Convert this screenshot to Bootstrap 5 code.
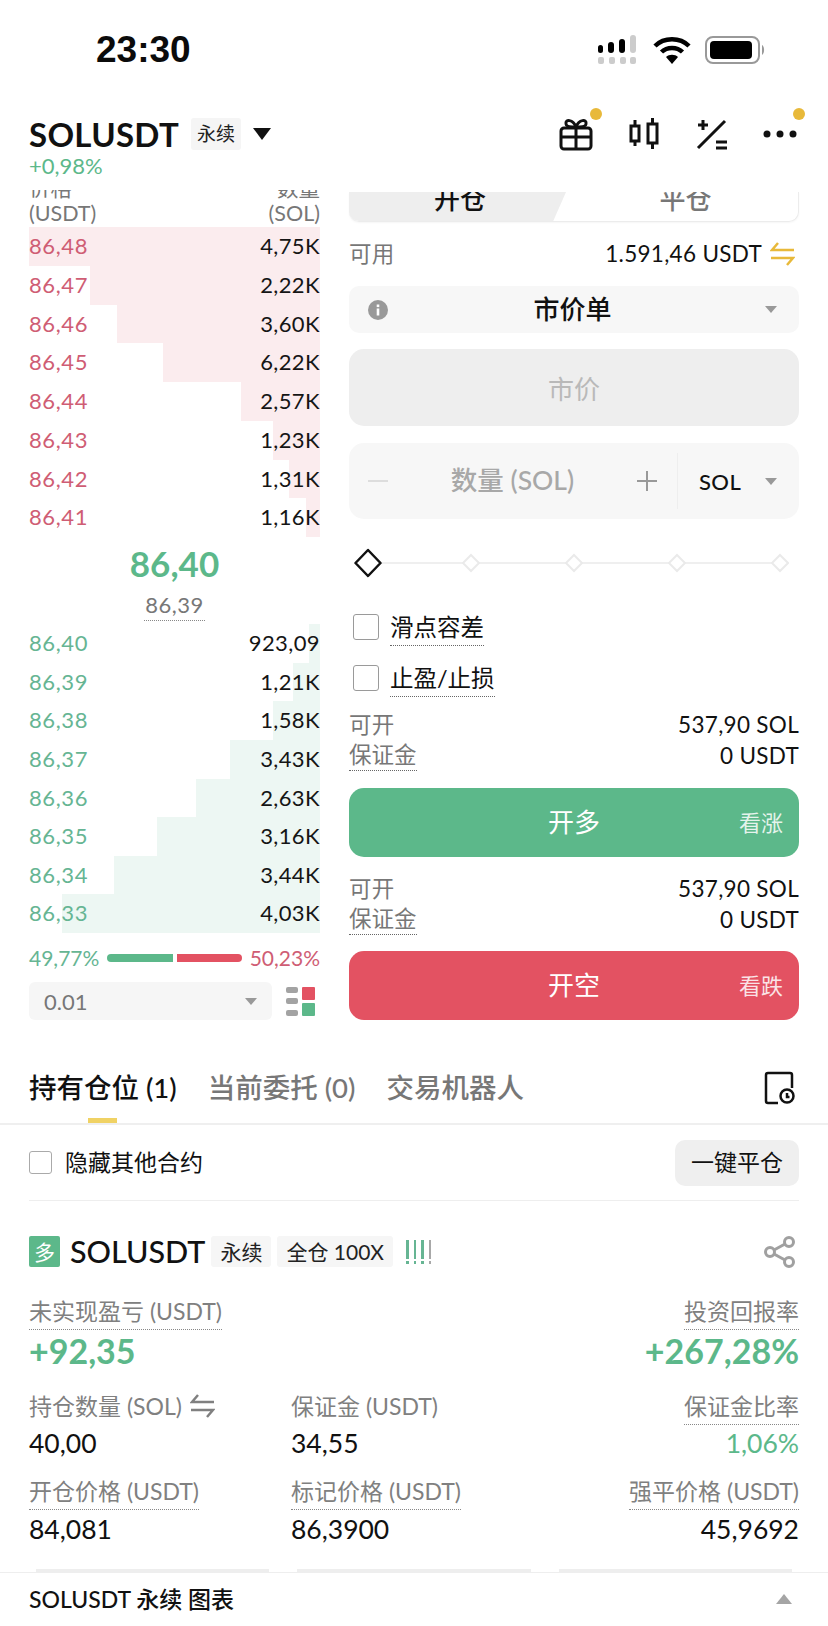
<!DOCTYPE html>
<html lang="zh-CN">
<head>
  <meta charset="UTF-8">
  <meta name="viewport" content="width=device-width, initial-scale=1">
  <title>SOLUSDT 永续</title>
  <link href="https://cdn.jsdelivr.net/npm/bootstrap@5.3.2/dist/css/bootstrap.min.css" rel="stylesheet">
  <style>
    body { width: 828px; height: 1626px; overflow: hidden; background: #fff; color: #111; font-family: Lato, "Noto Sans CJK SC", sans-serif; }
    .status-bar { height: 100px; padding: 0 62px 0 96px; }
    .status-time { font: bold 37px "Liberation Sans", sans-serif; color: #0b0b0b; }
    .top-head { height: 90px; padding: 17px 29px 0; }
    .pair-name { font-size: 33px; font-weight: 700; line-height: 34px; letter-spacing: .3px; }
    .tag-soft { background: #f5f5f5; font-size: 19px; line-height: 32px; padding: 0 6px; border-radius: 3px; color: #222; margin-left: 12px; }
    .pair-caret { margin-left: 11px; }
    .pair-change { font-size: 22px; line-height: 26px; color: #5cb88a; margin-top: 2px; }
    .head-icons { gap: 35px; margin-right: 1px; }
    .head-icon { position: relative; display: block; }
    .head-dot { position: absolute; width: 12px; height: 12px; border-radius: 50%; background: #e8b93a; top: -9px; right: -9px; }
    .trade-wrap { padding: 0 29px; gap: 29px; height: 830px; }
    .book-col { width: 291px; }
    .form-col { width: 450px; padding-top: 2px; }
    .book-clip { height: 37px; overflow: hidden; }
    .book-head { margin-top: -14px; font-size: 21.5px; line-height: 25px; color: #777; }
    .book-line { position: relative; font-size: 22px; }
    .book-ask .book-line { height: 38.75px; line-height: 38.75px; }
    .book-bid .book-line { height: 38.625px; line-height: 38.625px; }
    .book-fill { position: absolute; top: 0; right: 0; bottom: 0; }
    .book-ask .book-fill { background: #fbecee; }
    .book-bid .book-fill { background: #edf7f3; }
    .book-ask .book-price { color: #cf5d74; }
    .book-bid .book-price { color: #66b593; }
    .book-price, .book-size { position: relative; letter-spacing: .6px; }
    .book-size { color: #151515; letter-spacing: .4px; }
    .mid-price { height: 52px; line-height: 52px; font-size: 35px; font-weight: 700; color: #5cb88a; }
    .mark-price { height: 32px; line-height: 31px; font-size: 22px; color: #777; letter-spacing: .5px; display: inline-block; border-bottom: 1px dotted #888; padding: 0 1px; }
    .mid-box { height: 87px; }
    .ratio-line { height: 49px; font-size: 21px; gap: 8px; }
    .ratio-green { color: #66b593; }
    .ratio-red { color: #cf5d74; }
    .ratio-bar { height: 8px; flex: 1; }
    .step-select { height: 38px; width: 243px; background: #f6f6f6; border-radius: 6px; padding: 0 15px; color: #777; font-size: 22px; }
    .tri-down { width: 0; height: 0; border-left: 6px solid transparent; border-right: 6px solid transparent; border-top: 7px solid #999; display: block; }
    .tab-clip { height: 30px; overflow: hidden; border: 1px solid #ececec; border-width: 0 1px 1px 0; border-radius: 0 0 10px 10px; box-shadow: 0 1px 2px rgba(0,0,0,.04); position: relative; }
    .tab-inner { height: 46px; margin-top: -16px; font-size: 26px; }
    .tab-on { width: 224px; background: #eee; color: #111; font-weight: 500; clip-path: polygon(0 0, 100% 0, 91% 100%, 0 100%); padding-right: 2px; }
    .tab-off { color: #777; font-weight: 500; }
    .avail-line { height: 64px; font-size: 22.5px; letter-spacing: .3px; }
    .muted-label { color: #777; }
    .soft-box { background: #f7f7f7; border-radius: 10px; }
    .order-type { height: 47px; padding: 0 22px 0 19px; font-size: 26px; font-weight: 500; }
    .order-side { width: 30px; }
    .price-box { height: 77px; background: #eee; border-radius: 15px; margin-top: 16px; padding-top: 3px; font-size: 26px; color: #b9b9b9; }
    .qty-box { height: 76px; margin-top: 17px; border-radius: 15px; padding-left: 19px; font-size: 26.5px; font-weight: 500; color: #a8a8a8; }
    .qty-unit { width: 122px; height: 56px; border-left: 1px solid #eee; margin-left: 20px; padding: 0 22px 0 21px; color: #111; font-size: 22px; font-weight: 500; letter-spacing: .4px; }
    .slider-box { height: 44px; margin-top: 22px; padding: 0 10px 0 5px; }
    .check-line { height: 51px; gap: 11px; font-size: 23.5px; padding-left: 4px; }
    .check-line .form-check-input { width: 26px; height: 26px; margin: 0; border: 1.5px solid #9a9a9a; border-radius: 3px; flex: none; }
    .dot-under { border-bottom: 1px dotted #666; }
    .check-text { line-height: 35px; margin-top: 3px; }
    .info-line { height: 31px; font-size: 22.5px; letter-spacing: .3px; }
    .info-line .dot-under { line-height: 30px; letter-spacing: 0; }
    .info-first { margin-top: 6px; }
    .trade-btn { height: 69px; border-radius: 15px; border: 0; color: #fff; font-size: 26px; position: relative; width: 100%; display: block; }
    .trade-btn:hover { color: #fff; }
    .btn-long, .btn-long:hover { background: #5cb88a; margin: 17px 0 16px; }
    .btn-short, .btn-short:hover { background: #e35262; margin-top: 16px; }
    .btn-hint { position: absolute; right: 16px; top: 0; line-height: 69px; font-size: 22px; color: rgba(255,255,255,.85); }
    .pos-tabs { height: 105px; padding: 44px 29px 0; border-bottom: 2px solid #efefef; font-size: 27.5px; gap: 31px; color: #777; font-weight: 500; }
    .pos-tab { line-height: 48px; position: relative; white-space: nowrap; }
    .pos-tab-on { color: #111; }
    .pos-tab-on::after { content: ""; position: absolute; left: 59px; width: 29px; height: 5px; background: #f0d264; bottom: 0; }
    .hide-line { height: 76px; margin: 0 29px; border-bottom: 1px solid #eee; font-size: 23px; }
    .hide-check { gap: 13px; }
    .hide-check .form-check-input { width: 23px; height: 23px; margin: 0; border: 1.5px solid #aaa; border-radius: 3px; }
    .close-all { height: 46px; width: 124px; padding: 0; background: #efefef; border: 0; border-radius: 10px; font-size: 23px; color: #111; }
    .pos-card { padding: 28px 29px 0; }
    .pos-side { width: 31px; height: 31px; background: #5cb88a; color: #fff; font-size: 21px; line-height: 31px; border-radius: 2px; text-align: center; }
    .pos-name { font-size: 30.5px; font-weight: 500; margin: 0 6px 0 10px; }
    .pos-tag { background: #f6f6f6; font-size: 21px; line-height: 31px; padding: 0 9px; border-radius: 3px; margin-right: 6px; color: #222; }
    .lev-bars { gap: 5px; margin-left: 7px; }
    .lev-bars i { width: 2.500px; height: 24px; background: repeating-linear-gradient(#66b593 0 19px, transparent 19px 21px, #66b593 21px 24px); display: block; }
    .lev-bars i:last-child { background: repeating-linear-gradient(#a8a8a8 0 19px, transparent 19px 21px, #a8a8a8 21px 24px); }
    .metric-grid { display: grid; grid-template-columns: 262px 1fr auto; margin-top: 18px; }
    .metric-label { display: inline-block; height: 37px; line-height: 36px; font-size: 23px; color: #808080; }
    .metric-label.dot-under { border-bottom-color: #888; }
    .metric-end { text-align: right; }
    .metric-big { height: 58px; line-height: 42px; font-size: 34px; font-weight: 700; color: #5cb88a; }
    .metric-val { height: 48px; line-height: 36px; font-size: 26.5px; }
    .metric-val.third { height: 60px; line-height: 38px; }
    .metric-green { color: #5cb88a; }
    .cut-btns { height: 3px; gap: 28px; padding: 0 36px; margin-top: -1px; }
    .cut-btns div { flex: 1; background: #eee; }
    .chart-foot { height: 58px; border-top: 1px solid #eee; padding: 0 36px 4px 29px; font-size: 23px; font-weight: 500; background: #fff; }
    .tri-up { width: 0; height: 0; border-left: 8px solid transparent; border-right: 8px solid transparent; border-bottom: 10px solid #a5a5a5; display: block; }
  </style>
</head>
<body>

  <div class="status-bar d-flex align-items-center justify-content-between">
    <div class="status-time">23:30</div>
    <div class="d-flex align-items-center" style="gap:14px">
      <svg width="42" height="30" viewBox="0 0 42 30">
        <rect x="1" y="10" width="5" height="8" rx="2.5"/><rect x="11" y="7" width="6" height="11" rx="3"/><rect x="22" y="4" width="6" height="14" rx="3"/><rect x="33" y="0" width="6" height="18" rx="3" fill="#ccc"/>
        <g fill="#ccc"><rect x="1" y="22" width="6" height="7" rx="2"/><rect x="12" y="22" width="6" height="7" rx="2"/><rect x="23" y="22" width="6" height="7" rx="2"/><rect x="33" y="22" width="6" height="7" rx="2"/></g>
      </svg>
      <svg width="38" height="28" viewBox="0 0 38 28">
        <path d="M2 10C11 1 27 1 36 10" fill="none" stroke="#000" stroke-width="4.5"/><path d="M8.500 16C14 10.500 24 10.500 29.500 16" fill="none" stroke="#000" stroke-width="4.5"/><path d="M13 21C16 18 22 18 25 21L19 28Z"/>
      </svg>
      <svg width="61" height="28" viewBox="0 0 61 28">
        <rect x="1" y="1" width="53" height="26" rx="7" fill="none" stroke="#999" stroke-width="2"/><rect x="5" y="5" width="42" height="18" rx="4"/><path d="M57 9c2.500 1 3 8 0 10z" fill="#999"/>
      </svg>
    </div>
  </div>

  <div class="top-head d-flex justify-content-between align-items-start">
    <div>
      <div class="d-flex align-items-center">
        <span class="pair-name">SOLUSDT</span>
        <span class="tag-soft">永续</span>
        <svg class="pair-caret" width="20" height="14" viewBox="0 0 20 14"><path d="M1 1h18l-9 12z" fill="#111"/></svg>
      </div>
      <div class="pair-change">+0,98%</div>
    </div>
    <div class="head-icons d-flex align-items-center">
      <span class="head-icon">
        <svg class="d-block" width="34" height="34" viewBox="0 0 34 34" fill="none" stroke="#111" stroke-width="3"><rect x="2" y="11" width="30" height="21" rx="3"/><path d="M2 20h30M17 11v21M17 10c-3-8-11-8-10-3 0 3 6 3 10 3zM17 10c3-8 11-8 10-3 0 3-6 3-10 3z"/></svg>
        <span class="head-dot"></span>
      </span>
      <svg width="32" height="34" viewBox="0 0 32 34" fill="none" stroke="#111" stroke-width="3"><rect x="3" y="9" width="8" height="15"/><path d="M7 3v6M7 24v5"/><rect x="20" y="7" width="9" height="19"/><path d="M24.500 1v6M24.500 26v6"/></svg>
      <svg width="32" height="34" viewBox="0 0 32 34" fill="none" stroke="#111" stroke-width="3"><path d="M3 31L30 4M3 8h10M8 3v10M21 25h11M21 31h11"/></svg>
      <span class="head-icon">
        <svg class="d-block" width="36" height="34" viewBox="0 0 36 34" fill="#111"><circle cx="5" cy="17" r="3.500"/><circle cx="18" cy="17" r="3.500"/><circle cx="31" cy="17" r="3.500"/></svg>
        <span class="head-dot" style="right:-7px"></span>
      </span>
    </div>
  </div>

  <div class="trade-wrap d-flex">
    <div class="book-col">
      <div class="book-clip">
        <div class="book-head d-flex justify-content-between">
          <div>价格<br>(USDT)</div>
          <div class="text-end">数量<br>(SOL)</div>
        </div>
      </div>
      <div id="asks" class="book-ask"></div>
      <div class="mid-box text-center">
        <div class="mid-price">86,40</div>
        <div class="mark-price">86,39</div>
      </div>
      <div id="bids" class="book-bid"></div>
      <div class="ratio-line d-flex align-items-center">
        <span class="ratio-green">49,77%</span>
        <div class="ratio-bar d-flex" style="gap:4px">
          <div class="flex-fill rounded-start-pill" style="background:#5cb88a"></div>
          <div class="flex-fill rounded-end-pill" style="background:#e35262"></div>
        </div>
        <span class="ratio-red">50,23%</span>
      </div>
      <div class="d-flex align-items-center justify-content-between">
        <div class="step-select d-flex align-items-center justify-content-between">
          <span>0.01</span><span class="tri-down"></span>
        </div>
        <svg class="me-1" width="30" height="31" viewBox="0 0 30 31">
          <g fill="#a3a3a3"><rect y="1" width="12" height="6" rx="2"/><rect y="12" width="12" height="6" rx="2"/><rect y="24" width="12" height="6" rx="2"/></g>
          <rect x="16" y="1" width="13" height="13" rx="1" fill="#e35262"/><rect x="16" y="17" width="13" height="13" rx="1" fill="#5cb88a"/>
        </svg>
      </div>
    </div>

    <div class="form-col">
      <div class="tab-clip">
        <div class="tab-inner d-flex align-items-center">
          <div class="tab-on h-100 d-flex align-items-center justify-content-center">开仓</div>
          <div class="tab-off flex-fill text-center">平仓</div>
        </div>
      </div>

      <div class="avail-line d-flex align-items-center justify-content-between">
        <span class="muted-label">可用</span>
        <span class="d-flex align-items-center gap-2">1.591,46 USDT
          <svg class="me-1" width="25" height="24" viewBox="0 0 25 24" fill="none" stroke="#e8b93a" stroke-width="2.500"><path d="M8 1L2 8h22M17 23l6-7H1"/></svg>
        </span>
      </div>

      <div class="soft-box order-type d-flex align-items-center justify-content-between">
        <span class="order-side d-block">
          <svg class="d-block" width="20" height="20" viewBox="0 0 20 20"><circle cx="10" cy="10" r="10" fill="#999"/><rect x="8.700" y="8.500" width="2.600" height="7" fill="#fff"/><rect x="8.700" y="4.500" width="2.600" height="2.600" fill="#fff"/></svg>
        </span>
        <span>市价单</span>
        <span class="order-side d-flex justify-content-end"><span class="tri-down"></span></span>
      </div>

      <div class="price-box d-flex align-items-center justify-content-center">市价</div>

      <div class="soft-box qty-box d-flex align-items-center">
        <svg width="20" height="20" viewBox="0 0 20 20"><path d="M0 10h20" stroke="#ddd" stroke-width="2"/></svg>
        <span class="flex-fill text-center">数量 (SOL)</span>
        <svg width="20" height="20" viewBox="0 0 20 20"><path d="M0 10h20M10 0v20" stroke="#999" stroke-width="2"/></svg>
        <div class="qty-unit d-flex align-items-center justify-content-between"><span>SOL</span><span class="tri-down"></span></div>
      </div>

      <div class="slider-box d-flex align-items-center">
        <svg class="w-100" height="30" viewBox="0 0 435 30">
          <path d="M20 15H426" stroke="#efefef" stroke-width="2"/>
          <g fill="#fff" stroke="#eaeaea" stroke-width="2">
            <path d="M117 7l8 8-8 8-8-8z"/><path d="M220 7l8 8-8 8-8-8z"/><path d="M323 7l8 8-8 8-8-8z"/><path d="M426 7l8 8-8 8-8-8z"/>
          </g>
          <path d="M14 2l12.500 13-12.500 13L1.500 15z" fill="#fff" stroke="#111" stroke-width="2.500" stroke-linejoin="round"/>
        </svg>
      </div>

      <div class="mt-3">
        <label class="check-line d-flex align-items-center">
          <input class="form-check-input" type="checkbox">
          <span class="dot-under check-text">滑点容差</span>
        </label>
        <label class="check-line d-flex align-items-center">
          <input class="form-check-input" type="checkbox">
          <span class="dot-under check-text">止盈/止损</span>
        </label>
      </div>

      <div class="info-first">
        <div class="info-line d-flex justify-content-between align-items-center"><span class="muted-label">可开</span><span>537,90 SOL</span></div>
        <div class="info-line d-flex justify-content-between align-items-center"><span class="muted-label dot-under">保证金</span><span>0 USDT</span></div>
      </div>
      <button class="btn trade-btn btn-long">开多<span class="btn-hint">看涨</span></button>
      <div class="info-line d-flex justify-content-between align-items-center"><span class="muted-label">可开</span><span>537,90 SOL</span></div>
      <div class="info-line d-flex justify-content-between align-items-center"><span class="muted-label dot-under">保证金</span><span>0 USDT</span></div>
      <button class="btn trade-btn btn-short">开空<span class="btn-hint">看跌</span></button>
    </div>
  </div>

  <div class="pos-tabs d-flex">
    <div class="pos-tab pos-tab-on">持有仓位 (1)</div>
    <div class="pos-tab">当前委托 (0)</div>
    <div class="pos-tab">交易机器人</div>
    <svg class="ms-auto" style="margin-top:7px;margin-right:3px" width="32" height="34" viewBox="0 0 32 34" fill="none" stroke="#111" stroke-width="2.500"><path d="M14 32H4a2 2 0 0 1-2-2V4a2 2 0 0 1 2-2h22a2 2 0 0 1 2 2v13"/><circle cx="23" cy="25" r="6.500"/><path d="M23 22v4h2.500"/></svg>
  </div>

  <div class="hide-line d-flex align-items-center justify-content-between">
    <label class="hide-check d-flex align-items-center">
      <input class="form-check-input" type="checkbox">
      <span>隐藏其他合约</span>
    </label>
    <button class="btn close-all">一键平仓</button>
  </div>

  <div class="pos-card">
    <div class="d-flex align-items-center">
      <span class="pos-side">多</span>
      <span class="pos-name">SOLUSDT</span>
      <span class="pos-tag">永续</span>
      <span class="pos-tag">全仓 100X</span>
      <span class="lev-bars d-flex"><i></i><i></i><i></i><i></i></span>
      <svg class="ms-auto" style="margin-right:3px" width="32" height="32" viewBox="0 0 32 32" fill="none" stroke="#a0a0a0" stroke-width="3"><circle cx="25" cy="6" r="4.500"/><circle cx="6" cy="16" r="4.500"/><circle cx="25" cy="26" r="4.500"/><path d="M10 14l11-6M10 18l11 6"/></svg>
    </div>

    <div class="metric-grid">
      <div><span class="metric-label dot-under">未实现盈亏 (USDT)</span><div class="metric-big">+92,35</div></div>
      <div></div>
      <div class="metric-end"><span class="metric-label dot-under">投资回报率</span><div class="metric-big">+267,28%</div></div>

      <div>
        <span class="metric-label d-inline-flex align-items-center gap-2">持仓数量 (SOL)
          <svg width="25" height="24" viewBox="0 0 25 24" fill="none" stroke="#808080" stroke-width="2.500"><path d="M8 1L2 8h22M17 23l6-7H1"/></svg>
        </span>
        <div class="metric-val">40,00</div>
      </div>
      <div><span class="metric-label">保证金 (USDT)</span><div class="metric-val">34,55</div></div>
      <div class="metric-end"><span class="metric-label dot-under">保证金比率</span><div class="metric-val metric-green">1,06%</div></div>

      <div><span class="metric-label dot-under">开仓价格 (USDT)</span><div class="metric-val third">84,081</div></div>
      <div><span class="metric-label dot-under">标记价格 (USDT)</span><div class="metric-val third">86,3900</div></div>
      <div class="metric-end"><span class="metric-label dot-under">强平价格 (USDT)</span><div class="metric-val third">45,9692</div></div>
    </div>
  </div>

  <div class="cut-btns d-flex"><div></div><div></div><div></div></div>
  <div class="chart-foot d-flex align-items-center justify-content-between">
    <span>SOLUSDT 永续 图表</span>
    <span class="tri-up"></span>
  </div>

  <script>
    // profundidade: preco, quantidade, largura da barra em px
    const asks = [
      ['86,48', '4,75K', 291], ['86,47', '2,22K', 230], ['86,46', '3,60K', 203], ['86,45', '6,22K', 157],
      ['86,44', '2,57K', 79], ['86,43', '1,23K', 47], ['86,42', '1,31K', 31], ['86,41', '1,16K', 14]
    ];
    const bids = [
      ['86,40', '923,09', 11], ['86,39', '1,21K', 27], ['86,38', '1,58K', 47], ['86,37', '3,43K', 90],
      ['86,36', '2,63K', 124], ['86,35', '3,16K', 163], ['86,34', '3,44K', 206], ['86,33', '4,03K', 258]
    ];
    const render = (rows) => rows.map(r => `
      <div class="book-line d-flex justify-content-between">
        <div class="book-fill" style="width:${r[2]}px"></div>
        <span class="book-price">${r[0]}</span>
        <span class="book-size">${r[1]}</span>
      </div>`).join('');
    document.getElementById('asks').innerHTML = render(asks);
    document.getElementById('bids').innerHTML = render(bids);
  </script>
  <script src="https://cdn.jsdelivr.net/npm/bootstrap@5.3.2/dist/js/bootstrap.bundle.min.js"></script>
</body>
</html>
